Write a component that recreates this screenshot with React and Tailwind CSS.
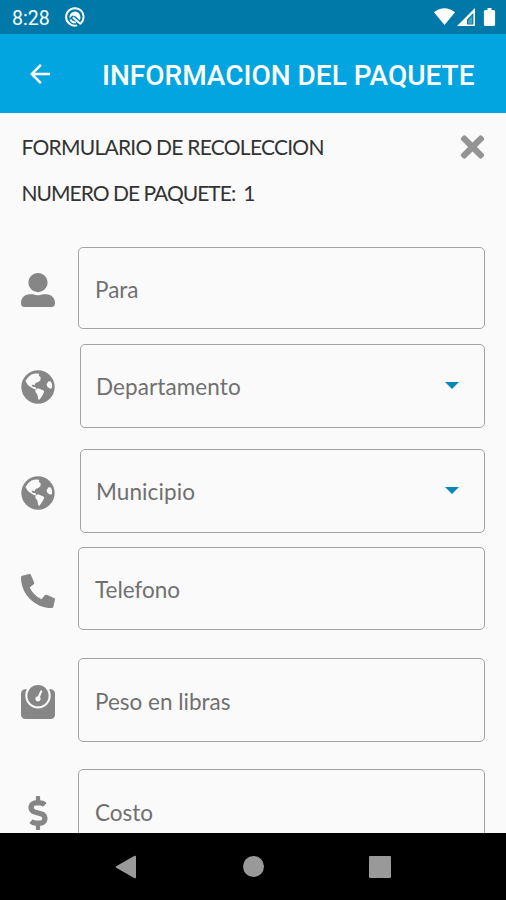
import React from 'react';
import { FaUserAlt, FaPhoneAlt, FaWeight, FaDollarSign, FaTimes } from 'react-icons/fa';
import { MdArrowBack } from 'react-icons/md';

const Globe = ({ className }) => (
    <svg viewBox="0 0 100 100" className={className}>
        <circle cx="50" cy="50" r="49" fill="currentColor" />
        <g fill="#fafafa">
            <path d="M13 32Q20 19 31 13Q42 9 54 11L52 17L58 21L57 30Q52 37 43 38L40 45L34 43L31 47L37 50L42 50L46 57L38 56L27 49L20 44Z" />
            <path d="M43 57L50 54L66 60Q70 63 67 67L63 75L55 87L51 87L48 72L42 64Z" />
            <path d="M75 42L81 33L88 34Q93 43 91 53L86 55L78 50Z" />
        </g>
    </svg>
);

const fields = [
    { label: 'Para', icon: FaUserAlt, row: 'h-[82px] mt-[40px]', iconTop: 'mt-[3px]' },
    { label: 'Departamento', icon: Globe, row: 'h-[84px] mt-[15px]', iconTop: 'mt-[2px]', select: true },
    { label: 'Municipio', icon: Globe, row: 'h-[84px] mt-[21px]', iconTop: 'mt-[3px]', select: true },
    { label: 'Telefono', icon: FaPhoneAlt, row: 'h-[83px] mt-[14px]', iconTop: 'mt-[4px]' },
    { label: 'Peso en libras', icon: FaWeight, row: 'h-[84px] mt-[28px]', iconTop: 'mt-[3px]' },
    { label: 'Costo', icon: FaDollarSign, row: 'h-[84px] mt-[27px]', iconTop: 'mt-[4px]' },
];

const StatusBar = () => (
    <div className="h-[34px] shrink-0 bg-[#0079a8] flex items-center pl-[12px] pr-[9px] text-white">
        <span className="text-[19.5px] leading-none mt-[3px]">8:28</span>
        <svg viewBox="0 0 20 20" className="w-5 h-5 ml-[15px]" fill="none" stroke="currentColor">
            <path d="M15.700 16.400A8.700 8.700 0 1 0 12 18.400" strokeWidth="2" />
            <path d="M4.600 11.500A5.500 5.500 0 0 1 15 8Q16.300 11 14.500 13.300L10.800 9.600 7.300 8.600Z" fill="currentColor" stroke="none" />
            <path d="M7.800 10.200l8 7M5.300 12.500a5.300 5.300 0 0 0 5.700 2.800" strokeWidth="1.8" />
        </svg>
        <svg viewBox="0 0 64 20" className="w-16 h-5 ml-auto" fill="currentColor">
            <path d="M1 5.200Q11.500-2.800 22 5.200L11.500 18Z" />
            <path d="M42 1v18H24ZM40.400 6L34 12.400v5h6.400Z" fillRule="evenodd" />
            <path d="M39.300 8.800v8h-4.200v-3.600Z" opacity=".3" />
            <path d="M54.500 1h4v2h2q1.600 0 1.600 1.600v12.800q0 1.600-1.600 1.600h-8q-1.600 0-1.600-1.600V4.600q0-1.600 1.600-1.600h2Z" />
        </svg>
    </div>
);

const Header = () => (
    <header className="h-[79px] shrink-0 bg-[#02a5df] flex items-center pl-[25px] text-white">
        <MdArrowBack className="w-[30px] h-[30px]" />
        <h1 className="ml-[47px] mt-[4px] text-[28px] leading-none font-medium whitespace-nowrap">INFORMACION DEL PAQUETE</h1>
    </header>
);

const Field = ({ label, icon: Icon, row, iconTop, select }) => (
    <div className={`flex shrink-0 items-center pl-[21px] pr-[21px] ${row}`}>
        <Icon className={`w-[34px] h-[34px] text-[#868686] shrink-0 ${iconTop}`} />
        <div className={`flex-1 h-full border border-[#a2a2a2] rounded-[5px] flex items-center justify-between pr-[25px] ${select ? 'ml-[25px] pl-[15px]' : 'ml-[23px] pl-[16px]'}`}>
            <span className={`text-[22.5px] leading-none text-[#707070] ${select ? 'mt-[3px] tracking-[0.1px]' : 'mt-[4px]'}`}>{label}</span>
            {select && (
                <svg viewBox="0 0 14 7" className="w-[14px] h-[7px] mb-[2px]">
                    <path d="M0 0h14L7 7Z" fill="#0689b8" />
                </svg>
            )}
        </div>
    </div>
);

const NavBar = () => (
    <nav className="h-[67px] shrink-0 bg-black flex items-center justify-between pl-[115px] pr-[115px]">
        <svg viewBox="0 0 22 24" className="w-[22px] h-6" fill="#999">
            <path d="M1.200 11.200L19.600.8Q21 .3 21 1.600v20.800q0 1.300-1.400.8L1.200 12.800Q0 12 1.200 11.200Z" />
        </svg>
        <div className="w-[21px] h-[21px] rounded-full bg-[#999]" />
        <div className="w-[22px] h-[22px] rounded-[1px] bg-[#999]" />
    </nav>
);

const App = () => (
    <div className="w-[506px] h-[900px] flex flex-col overflow-hidden bg-[#fafafa] font-[Roboto,sans-serif]">
        <StatusBar />
        <Header />
        <main className="flex-1 min-h-0 overflow-hidden flex flex-col font-[Lato,sans-serif]">
            <div className="flex items-center justify-between shrink-0 pl-[21.5px] pr-[21px] mt-[20px] h-[28px]">
                <span className="text-[21px] leading-none tracking-[-0.75px] text-[#333] mb-[1px]">FORMULARIO DE RECOLECCION</span>
                <FaTimes className="w-[25px] h-[34px] shrink-0 text-[#949494]" />
            </div>
            <div className="shrink-0 pl-[21.5px] mt-[18px] mb-[1px] h-[27px] flex items-center gap-[8px] text-[21px] leading-none text-[#333]">
                <span className="tracking-[-0.98px]">NUMERO DE PAQUETE:</span>
                <span>1</span>
            </div>
            {fields.map((field) => (
                <Field key={field.label} {...field} />
            ))}
        </main>
        <NavBar />
    </div>
);

export default App;
